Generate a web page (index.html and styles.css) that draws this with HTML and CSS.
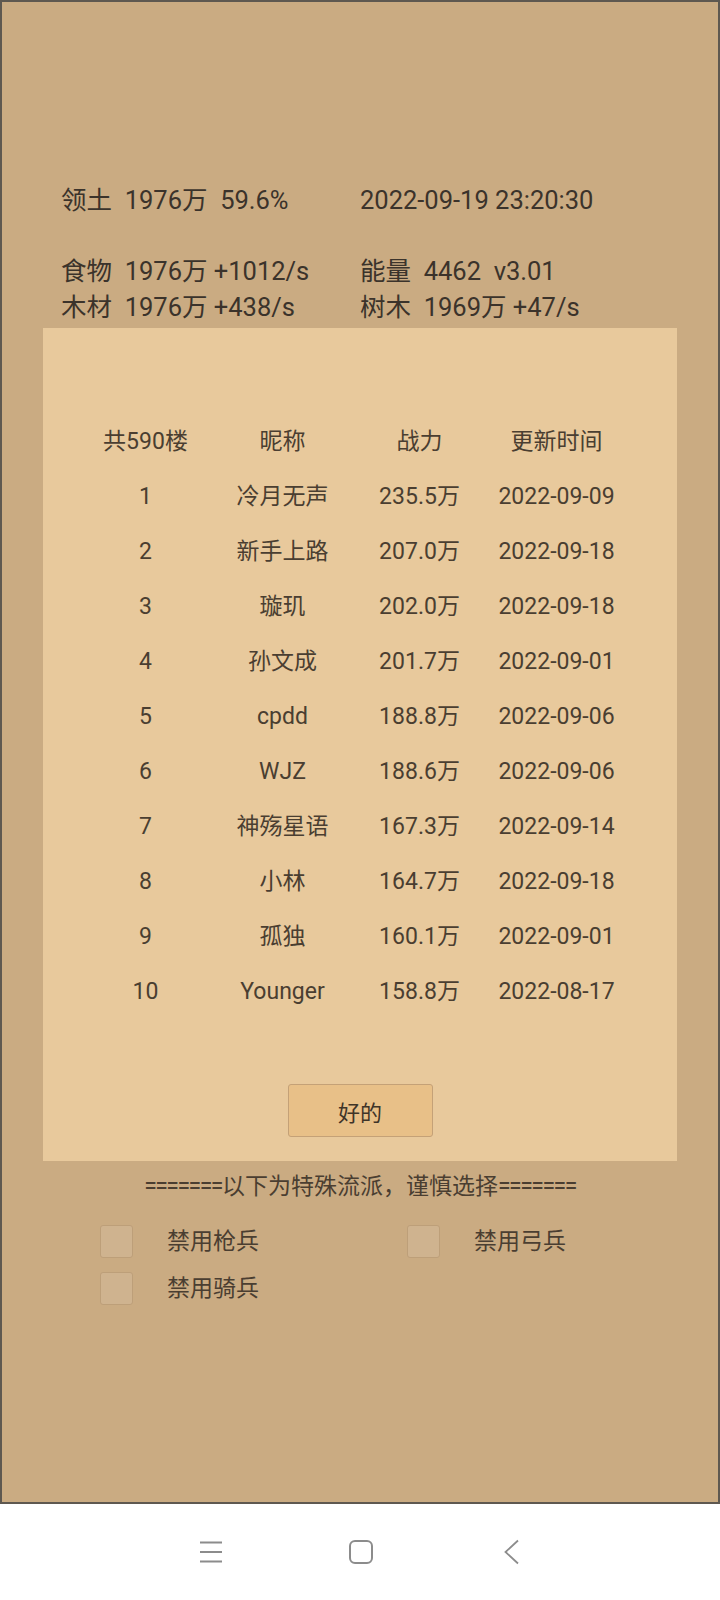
FILE: index.html
```html
<!DOCTYPE html>
<html>

<head>
    <title>领土</title>
    <meta charset="utf-8">
    <link rel="stylesheet" href="styles.css">
</head>

<body>
    <div class="screen">
        <section class="stats">
            <div class="stat-row first">
                <span class="cell">领土  1976万  59.6%</span>
                <span class="cell">2022-09-19 23:20:30</span>
            </div>
            <div class="stat-row">
                <span class="cell">食物  1976万 +1012/s</span>
                <span class="cell">能量  4462  v3.01</span>
            </div>
            <div class="stat-row">
                <span class="cell">木材  1976万 +438/s</span>
                <span class="cell">树木  1969万 +47/s</span>
            </div>
        </section>

        <section class="panel">
            <div class="rank-table">
                <div class="rank-row head">
                    <span>共590楼</span><span>昵称</span><span>战力</span><span>更新时间</span>
                </div>
                <div class="rank-row"><span>1</span><span>冷月无声</span><span>235.5万</span><span>2022-09-09</span></div>
                <div class="rank-row"><span>2</span><span>新手上路</span><span>207.0万</span><span>2022-09-18</span></div>
                <div class="rank-row"><span>3</span><span>璇玑</span><span>202.0万</span><span>2022-09-18</span></div>
                <div class="rank-row"><span>4</span><span>孙文成</span><span>201.7万</span><span>2022-09-01</span></div>
                <div class="rank-row"><span>5</span><span>cpdd</span><span>188.8万</span><span>2022-09-06</span></div>
                <div class="rank-row"><span>6</span><span>WJZ</span><span>188.6万</span><span>2022-09-06</span></div>
                <div class="rank-row"><span>7</span><span>神殇星语</span><span>167.3万</span><span>2022-09-14</span></div>
                <div class="rank-row"><span>8</span><span>小林</span><span>164.7万</span><span>2022-09-18</span></div>
                <div class="rank-row"><span>9</span><span>孤独</span><span>160.1万</span><span>2022-09-01</span></div>
                <div class="rank-row"><span>10</span><span>Younger</span><span>158.8万</span><span>2022-08-17</span></div>
            </div>
            <div class="actions">
                <button class="ok-button">好的</button>
            </div>
        </section>

        <section class="special">
            <div class="notice"><span class="eq">=======</span>以下为特殊流派，谨慎选择<span class="eq">=======</span></div>
            <div class="options">
                <label class="option"><span class="box"></span><span class="option-text">禁用枪兵</span></label>
                <label class="option"><span class="box"></span><span class="option-text">禁用弓兵</span></label>
                <label class="option"><span class="box"></span><span class="option-text">禁用骑兵</span></label>
            </div>
        </section>
    </div>

    <nav class="navbar">
        <svg class="nav-icon" width="40" height="30" viewBox="0 0 40 30">
            <path d="M9 5.5H31M9 15H31M9 24.5H31" stroke="#8c8c8c" stroke-width="1.8" fill="none"/>
        </svg>
        <svg class="nav-icon" width="40" height="30" viewBox="0 0 40 30">
            <rect x="9" y="4" width="22" height="22" rx="5" stroke="#8c8c8c" stroke-width="2" fill="none"/>
        </svg>
        <svg class="nav-icon" width="40" height="30" viewBox="0 0 40 30">
            <path d="M27 3.5L14.5 15L27 26.5" stroke="#8c8c8c" stroke-width="1.8" fill="none"/>
        </svg>
    </nav>
</body>

</html>
```

FILE: styles.css
```css
body {
    margin: 0;
    font-family: Roboto, 'Noto Sans CJK SC', sans-serif;
    background-color: #fff;
    color: #3b332b;
}

.screen {
    box-sizing: border-box;
    height: 1504px;
    background-color: #caab82;
    border: 2px solid #5e5850;
    padding-top: 180px;
}

.stats {
    padding-left: 59px;
}

.stat-row {
    display: grid;
    grid-template-columns: 299px 1fr;
    height: 36px;
    line-height: 36px;
    font-size: 25.5px;
}

.stat-row.first {
    margin-bottom: 35px;
}

.cell {
    white-space: pre;
}

.panel {
    margin: 3px 0 0 41px;
    width: 634px;
    background-color: #e8c99c;
    padding: 86px 0 24px;
}

.rank-table {
    margin-left: 34px;
    width: 548px;
    color: #4a3e31;
}

.rank-row {
    display: grid;
    grid-template-columns: repeat(4, 137px);
    height: 55px;
    line-height: 55px;
    font-size: 23px;
    text-align: center;
}

.actions {
    display: flex;
    justify-content: center;
    margin-top: 65px;
}

.ok-button {
    width: 145px;
    height: 53px;
    background-color: #e8c088;
    border: 1px solid #c4a177;
    border-radius: 3px;
    font-family: Roboto, 'Noto Sans CJK SC', sans-serif;
    font-size: 22px;
    color: #3f3428;
}

.special {
    margin-top: 11px;
}

.notice {
    height: 30px;
    line-height: 30px;
    font-size: 23px;
    text-align: center;
    color: #4a3e31;
}

.eq {
    letter-spacing: -1.5px;
}

.options {
    display: grid;
    grid-template-columns: 307px 307px;
    row-gap: 14px;
    padding-left: 98px;
    margin-top: 23px;
}

.option {
    display: flex;
    align-items: center;
    height: 33px;
    font-size: 23px;
    line-height: 30px;
    color: #4a3e31;
}

.box {
    box-sizing: border-box;
    width: 33px;
    height: 33px;
    background-color: #cfb38f;
    border: 1px solid #bd9f79;
    border-radius: 3px;
    margin-right: 34px;
}

.navbar {
    display: flex;
    align-items: center;
    gap: 110px;
    height: 96px;
    padding-left: 191px;
    background-color: #fff;
}

.nav-icon {
    display: block;
}
```
